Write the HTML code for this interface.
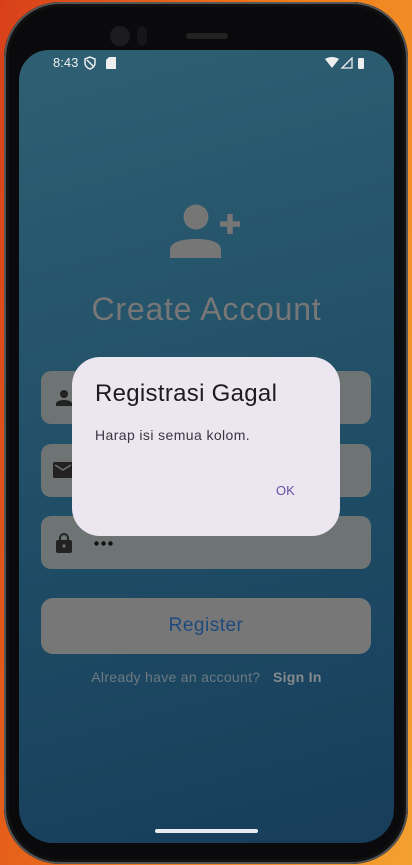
<!DOCTYPE html><html><head><style>
body{margin:0;width:412px;height:865px;overflow:hidden;background:linear-gradient(100deg,#d8401a,#f07a1a 50%,#f3a030);font-family:"Liberation Sans",sans-serif;position:relative}
.phone{position:absolute;left:4px;top:2px;width:404px;height:862px;border-radius:56px;background:#0a0a0c;box-shadow:inset 0 0 0 2px #555,inset 0 0 0 5px #111}
.screen{position:absolute;left:19px;top:50px;width:375px;height:793px;border-radius:30px 30px 34px 34px;background:linear-gradient(165deg,#2e5f72,#1f4d66 55%,#173d5a);overflow:hidden}
.abs{position:absolute}
.field{position:absolute;left:22px;width:330px;height:53px;border-radius:10px;background:#6e7373}
.sb{color:#eee;font-size:13px}
</style></head><body>
<div class="phone">
<div class="abs" style="left:106px;top:24px;width:20px;height:20px;border-radius:50%;background:#1c1c20"></div>
<div class="abs" style="left:133px;top:24px;width:10px;height:20px;border-radius:5px;background:#161619"></div>
<div class="abs" style="left:182px;top:31px;width:42px;height:6px;border-radius:3px;background:#222"></div>
</div>
<div class="screen">
<div class="abs sb" style="left:34px;top:5px">8:43</div>
<svg class="abs" style="left:64px;top:6px" width="14" height="14" viewBox="0 0 14 14"><path d="M7 1L2 3v4c0 3 2.5 5 5 6 2.5-1 5-3 5-6V3z M4 4l6 6" fill="none" stroke="#eee" stroke-width="1.5"/></svg>
<svg class="abs" style="left:87px;top:7px" width="10" height="12"><path d="M3 0h7v12H0V3z" fill="#eee"/></svg>
<svg class="abs" style="left:306px;top:7px" width="40" height="12" viewBox="0 0 40 12"><path d="M0 2Q7-2 14 2L7 11z" fill="#eee"/><path d="M27 1V11H17z" fill="none" stroke="#eee" stroke-width="1.3"/><rect x="33" y="1" width="6" height="11" rx="1" fill="#eee"/></svg>
<svg class="abs" style="left:150px;top:154px" width="74" height="56" viewBox="0 0 74 56"><circle cx="27" cy="13" r="12.5" fill="#767676"/><path d="M1 54V46c0-8 12-11 26-11s25 3 25 11v8z" fill="#767676"/><path d="M61 10v20M51 20h20" stroke="#767676" stroke-width="5.5"/></svg>
<div class="abs" style="left:0;width:375px;top:241px;text-align:center;font-size:32px;color:#777;letter-spacing:0.8px">Create Account</div>
<div class="field" style="top:321px"><svg class="abs" style="left:14px;top:18px" width="18" height="18" viewBox="0 0 18 18"><circle cx="9" cy="5" r="4" fill="#222"/><path d="M1 17v-2c0-3 4-4 8-4s8 1 8 4v2z" fill="#222"/></svg></div>
<div class="field" style="top:394px"><svg class="abs" style="left:12px;top:18px" width="20" height="16" viewBox="0 0 20 16"><rect width="20" height="16" rx="2" fill="#222"/><path d="M2 3l8 5 8-5" fill="none" stroke="#6e7373" stroke-width="1.5"/></svg></div>
<div class="field" style="top:466px"><svg class="abs" style="left:15px;top:16px" width="16" height="21" viewBox="0 0 16 21"><path d="M4 9V6a4 4 0 018 0v3" fill="none" stroke="#222" stroke-width="2"/><rect y="8" width="16" height="13" rx="2" fill="#222"/><circle cx="8" cy="14" r="1.6" fill="#6e7373"/></svg>
<svg class="abs" style="left:53px;top:25px" width="20" height="5"><circle cx="2.5" cy="2.5" r="2.2" fill="#111"/><circle cx="9.5" cy="2.5" r="2.2" fill="#111"/><circle cx="16.5" cy="2.5" r="2.2" fill="#111"/></svg></div>
<div class="abs" style="left:22px;top:548px;width:330px;height:56px;border-radius:12px;background:#777;text-align:center;line-height:56px;font-size:19px;color:#1d4a7c;letter-spacing:0.5px">Register</div>
<div class="abs" style="left:0;width:375px;top:619px;text-align:center;font-size:14px;color:#6e7a82;letter-spacing:0.3px">Already have an account? &nbsp;&nbsp;<b style="color:#868b8e">Sign In</b></div>
<div class="abs" style="left:136px;top:779px;width:103px;height:4px;border-radius:2px;background:#e8ecf0"></div>
<div class="abs" style="left:53px;top:307px;width:268px;height:179px;border-radius:28px;background:#ece6f1">
<div class="abs" style="left:23px;top:23px;font-size:24px;color:#1d1b20;letter-spacing:0.3px">Registrasi Gagal</div>
<div class="abs" style="left:23px;top:70px;font-size:14px;color:#3a3740;letter-spacing:0.4px">Harap isi semua kolom.</div>
<div class="abs" style="left:204px;top:126px;font-size:13px;color:#6750a4">OK</div>
</div>
</div>
</body></html>
